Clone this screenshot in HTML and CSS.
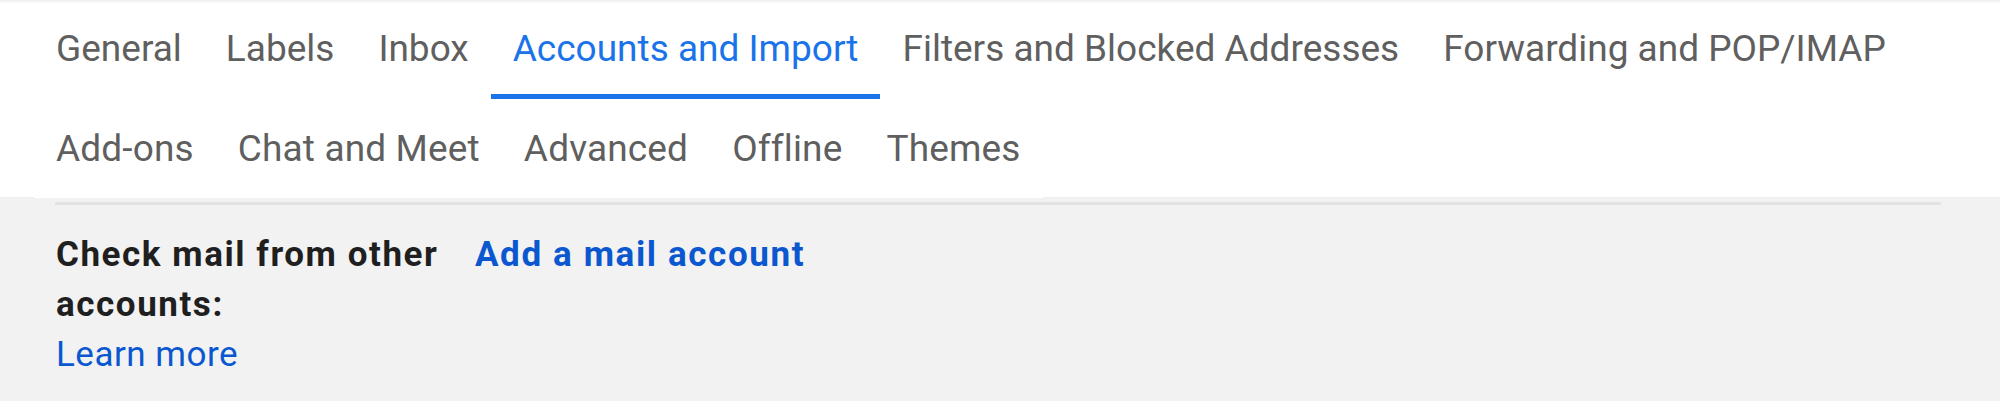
FILE: index.html
```html
<!DOCTYPE html>
<html lang="en">
<head>
<meta charset="utf-8">
<title>Settings</title>
<link rel="stylesheet" href="styles.css">
</head>
<body>
<div class="header">
  <div class="tab-row row-first">
    <div class="tab">General</div>
    <div class="tab">Labels</div>
    <div class="tab">Inbox</div>
    <div class="tab active">Accounts and Import</div>
    <div class="tab">Filters and Blocked Addresses</div>
    <div class="tab">Forwarding and POP/IMAP</div>
  </div>
  <div class="tab-row row-second">
    <div class="tab">Add-ons</div>
    <div class="tab">Chat and Meet</div>
    <div class="tab">Advanced</div>
    <div class="tab">Offline</div>
    <div class="tab">Themes</div>
  </div>
</div>
<div class="content">
  <div class="divider"></div>
  <div class="setting">
    <div class="label">
      <div class="label-title">Check mail from other accounts:</div>
      <a class="learn" href="#">Learn more</a>
    </div>
    <div class="value">
      <a class="action" href="#">Add a mail account</a>
    </div>
  </div>
</div>
</body>
</html>
```
FILE: styles.css
```css
* { box-sizing: border-box; }
html, body {
  margin: 0;
  padding: 0;
  background: #f2f2f2;
  font-family: Roboto, "Liberation Sans", sans-serif;
}
.header {
  background: linear-gradient(#efefef, #ffffff 4px);
  padding-left: 34px;
  border-bottom: 1px solid #eceef1;
}
.tab-row {
  display: flex;
  align-items: flex-start;
}
.row-first {
  height: 100px;
}
.row-second {
  height: 98px;
  width: fit-content;
  background: #ffffff;
  margin-bottom: -1px;
  position: relative;
}
.tab {
  height: 99px;
  padding: 27px 22px 0;
  font-size: 37px;
  line-height: normal;
  color: #5f5f5f;
  white-space: nowrap;
  border-bottom: 5px solid transparent;
}
.row-second .tab {
  height: 98px;
  border-bottom: 0;
  letter-spacing: 0.15px;
}
.tab.active {
  color: #1a73e8;
  border-bottom-color: #1a73e8;
}
.content {
  padding: 0 59px 0 55px;
}
.divider {
  height: 3px;
  margin-top: 4px;
  background: #e3e3e3;
}
.setting {
  display: grid;
  grid-template-columns: 419px auto;
  padding: 25px 0 0 1px;
  font-size: 35px;
  line-height: 50px;
}
.label-title {
  font-weight: 700;
  color: #1f1f1f;
  letter-spacing: 1.55px;
}
.learn {
  display: block;
  color: #0b57d0;
  text-decoration: none;
  letter-spacing: 0.5px;
}
.action {
  font-weight: 700;
  color: #0b57d0;
  text-decoration: none;
  letter-spacing: 1.6px;
}
```
